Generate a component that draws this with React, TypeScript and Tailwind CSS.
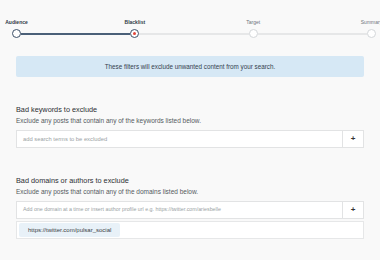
const steps = [
    { label: 'Audience', state: 'done' },
    { label: 'Blacklist', state: 'current' },
    { label: 'Target', state: 'todo' },
    { label: 'Summary', state: 'todo' },
];

function StepDot({ state }: { state: string }) {
    if (state === 'todo') {
        return <div className="h-[9px] w-[9px] shrink-0 rounded-full border-[1.5px] border-[#d4d7da] bg-white" />;
    }
    return (
        <div className="flex h-[9px] w-[9px] shrink-0 items-center justify-center rounded-full border-[1.5px] border-[#3d5068] bg-white">
            {state === 'current' && <div className="h-[3px] w-[3px] rounded-full bg-[#e2463a]" />}
        </div>
    );
}

function Stepper() {
    return (
        <div className="pl-[12px] pr-[4px] pt-[19px]">
            <div className="flex justify-between">
                {steps.map((s) => (
                    <div key={s.label} className="flex w-[9px] flex-col items-center">
                        <span
                            className={
                                s.state === 'todo'
                                    ? 'whitespace-nowrap text-[5px] leading-[6px] text-[#6f757c]'
                                    : 'whitespace-nowrap text-[5px] font-bold leading-[6px] text-[#2f3a46]'
                            }
                        >
                            {s.label}
                        </span>
                    </div>
                ))}
            </div>
            <div className="mt-[4px] flex items-center">
                <StepDot state="done" />
                <div className="h-[2px] flex-1 bg-[#4b6078]" />
                <StepDot state="current" />
                <div className="h-[2px] flex-1 bg-[#e6e7e8]" />
                <StepDot state="todo" />
                <div className="h-[2px] flex-1 bg-[#e6e7e8]" />
                <StepDot state="todo" />
            </div>
        </div>
    );
}

function AddInput({ placeholder, size }: { placeholder: string; size: string }) {
    return (
        <div className="flex h-[18px] border border-[#e2e3e4] bg-white">
            <div className={`flex flex-1 items-center px-[6px] text-[#9a9fa4] ${size}`}>{placeholder}</div>
            <div className="flex w-[21px] items-center justify-center border-l border-[#e2e3e4] text-[8px] font-bold leading-none text-[#333]">
                +
            </div>
        </div>
    );
}

export default function App() {
    return (
        <div className="h-[260px] w-[380px] overflow-hidden bg-[#f9f9f9]" style={{ fontFamily: '"Liberation Sans", Arial, sans-serif' }}>
            <Stepper />
            <div className="mx-[16px] mt-[18px] flex h-[21px] items-center justify-center rounded-[2px] bg-[#d6e8f5] text-[6.3px] text-[#34414e]">
                These filters will exclude unwanted content from your search.
            </div>

            <div className="px-[16px]">
                <div className="mt-[28px] text-[7.3px] leading-[9px] text-[#2c2f33]">Bad keywords to exclude</div>
                <div className="mt-[3px] text-[6.5px] leading-[8px] text-[#55595e]">
                    Exclude any posts that contain any of the keywords listed below.
                </div>
                <div className="mt-[5px]">
                    <AddInput placeholder="add search terms to be excluded" size="text-[5.8px]" />
                </div>

                <div className="mt-[28px] text-[7.3px] leading-[9px] text-[#2c2f33]">Bad domains or authors to exclude</div>
                <div className="mt-[3px] text-[6.5px] leading-[8px] text-[#55595e]">
                    Exclude any posts that contain any of the domains listed below.
                </div>
                <div className="mt-[5px]">
                    <AddInput
                        placeholder="Add one domain at a time or insert author profile url e.g. https://twitter.com/ariesbelle"
                        size="text-[5.3px]"
                    />
                </div>
                <div className="mt-[2px] flex h-[18px] items-center border border-[#e6e7e8] bg-white px-[2px]">
                    <span className="flex h-[14px] items-center rounded-[2px] bg-[#e8f1f8] px-[9px] text-[6px] text-[#3a3f45]">
                        https://twitter.com/pulsar_social
                    </span>
                </div>
            </div>
        </div>
    );
}
